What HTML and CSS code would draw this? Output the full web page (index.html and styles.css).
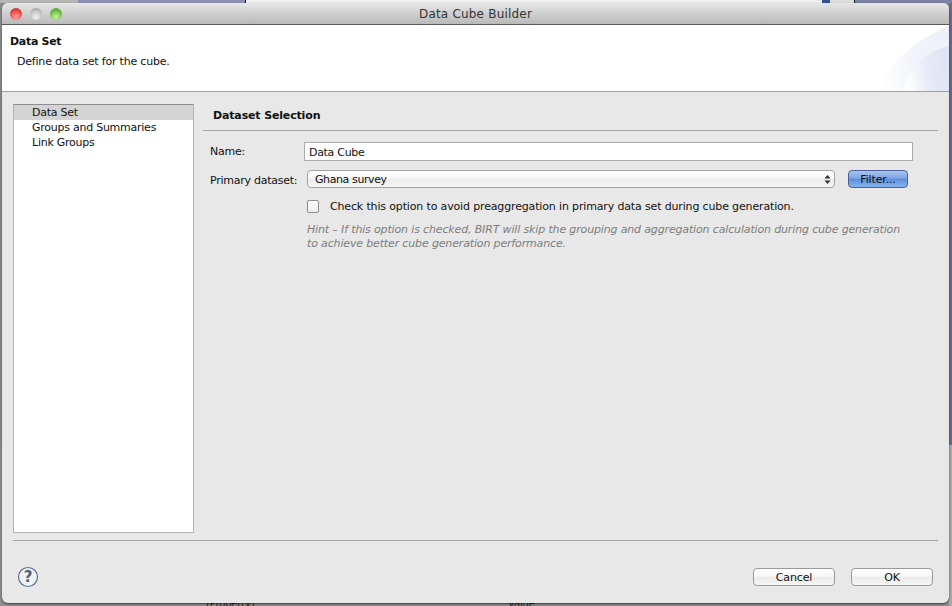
FILE: index.html
```html
<!DOCTYPE html>
<html lang="en">
<head>
    <meta charset="UTF-8">
    <meta name="viewport" content="width=device-width, initial-scale=1.0">
    <title>Data Cube Builder</title>
    <link rel="stylesheet" href="styles.css">
</head>
<body>
    <!-- bits of the windows behind the dialog -->
    <div class="desktop">
        <div class="desk-top"></div>
        <div class="desk-bottom">
            <span class="peek peek-left">(Property)</span>
            <span class="peek peek-right">Value</span>
        </div>
    </div>

    <div class="window">
        <div class="titlebar">
            <div class="lights">
                <span class="light light-red"></span>
                <span class="light light-grey"></span>
                <span class="light light-green"></span>
            </div>
            <div class="window-title">Data Cube Builder</div>
        </div>

        <div class="banner">
            <h1>Data Set</h1>
            <p>Define data set for the cube.</p>
            <svg class="banner-art" width="74" height="66" viewBox="0 0 74 66">
                <defs>
                    <linearGradient id="fade" x1="0" x2="1" y1="0.6" y2="0.4">
                        <stop offset="0" stop-color="#ffffff"/>
                        <stop offset="0.55" stop-color="#e6eaf7"/>
                        <stop offset="1" stop-color="#dfe4f4"/>
                    </linearGradient>
                </defs>
                <path d="M0 66C14 40 40 14 74 1V66Z" fill="url(#fade)" opacity="0.55"/>
                <path d="M28 66C34 44 50 27 74 21V66Z" fill="url(#fade)"/>
            </svg>
        </div>

        <div class="content">
            <div class="main">
                <ul class="nav">
                    <li class="selected">Data Set</li>
                    <li>Groups and Summaries</li>
                    <li>Link Groups</li>
                </ul>

                <div class="page">
                    <h2>Dataset Selection</h2>
                    <div class="form">
                        <div class="row row-name">
                            <label>Name:</label>
                            <input type="text" class="name-input" value="Data Cube">
                        </div>
                        <div class="row row-dataset">
                            <label>Primary dataset:</label>
                            <div class="select">
                                <span>Ghana survey</span>
                                <svg width="7" height="11" viewBox="0 0 7 11">
                                    <path d="M3.5 1L6.5 4.5H.5Z M3.5 10L.5 6.5H6.5Z" fill="#333"/>
                                </svg>
                            </div>
                            <button class="btn btn-default btn-filter">Filter...</button>
                        </div>
                        <div class="row-check">
                            <span class="checkbox"></span>
                            <span>Check this option to avoid preaggregation in primary data set during cube generation.</span>
                        </div>
                        <p class="hint">Hint – If this option is checked, BIRT will skip the grouping and aggregation calculation during cube generation<br>to achieve better cube generation performance.</p>
                    </div>
                </div>
            </div>

            <div class="footer">
                <svg class="help" width="22" height="22" viewBox="0 0 22 22">
                    <circle cx="11" cy="11" r="9.5" fill="#f0f1f3" stroke="#5a7096" stroke-width="1.2"/>
                    <text x="11" y="16" text-anchor="middle" class="help-mark">?</text>
                </svg>
                <div class="actions">
                    <button class="btn">Cancel</button>
                    <button class="btn">OK</button>
                </div>
            </div>
        </div>
    </div>
</body>
</html>
```

FILE: styles.css
```css
* {
    box-sizing: border-box;
}
html, body {
    margin: 0;
    height: 100%;
    overflow: hidden;
}
body {
    font-family: "DejaVu Sans", sans-serif;
    font-size: 11px;
    letter-spacing: -0.15px;
    color: #111;
    background-color: #8a8a8a;
}

/* desktop behind the dialog */
.desktop {
    position: absolute;
    inset: 0;
    display: flex;
    flex-direction: column;
}
.desk-top {
    height: 445px;
    background:
        linear-gradient(90deg, #b5b5b5 0, #b5b5b5 78px, #8c90b2 78px, #8c90b2 245px, #1a1a1a 245px, #1a1a1a 246px, #eeeeee 246px, #eeeeee 822px, #33518f 822px, #33518f 830px, #dddddd 830px, #dddddd 854px, #1a1a1a 854px, #1a1a1a 855px, #7c80a2 855px) top / 100% 3px no-repeat,
        linear-gradient(90deg, #8a8a8a 0, #8a8a8a 949px, #666a88 949px);
}
.desk-bottom {
    flex: 1;
    position: relative;
    background: linear-gradient(90deg, #8e8e8e 0, #8e8e8e 949px, #a8a8a8 949px);
}
.peek {
    position: absolute;
    top: 153px;
    font-size: 10px;
    color: #222;
    line-height: 12px;
}
.peek-left {
    left: 206px;
}
.peek-right {
    left: 508px;
}

/* dialog window */
.window {
    position: absolute;
    left: 2px;
    top: 3px;
    width: 947px;
    height: 600px;
    display: flex;
    flex-direction: column;
    border-radius: 6px;
    overflow: hidden;
    background-color: #e8e8e8;
    box-shadow: 0 1px 2px rgba(0, 0, 0, 0.6);
}
.titlebar {
    height: 22px;
    flex: none;
    display: flex;
    align-items: center;
    position: relative;
    background: linear-gradient(#e6e6e6, #b9b9b9);
    border-bottom: 1px solid #585858;
}
.lights {
    display: flex;
    gap: 8px;
    margin-left: 8px;
}
.light {
    width: 12px;
    height: 12px;
    border-radius: 50%;
}
.light-red {
    background: radial-gradient(circle at 50% 75%, #ffa8a0 0, #ec4a48 55%, #a81e22 100%);
}
.light-grey {
    background: radial-gradient(circle at 50% 75%, #f2f2f2 0, #c6c6c6 55%, #8e8e8e 100%);
}
.light-green {
    background: radial-gradient(circle at 50% 75%, #c8f2a0 0, #72c24a 55%, #3d8a24 100%);
}
.window-title {
    position: absolute;
    left: 0;
    right: 0;
    text-align: center;
    font-size: 12px;
    letter-spacing: 0.2px;
    color: #333;
}

.banner {
    height: 67px;
    flex: none;
    position: relative;
    background-color: #fff;
    border-bottom: 1px solid #a0a0a0;
}
.banner h1 {
    margin: 0;
    position: absolute;
    left: 8px;
    top: 10px;
    font-size: 11px;
    line-height: 14px;
    font-weight: bold;
    letter-spacing: -0.3px;
}
.banner p {
    margin: 0;
    position: absolute;
    left: 15px;
    top: 30px;
    line-height: 14px;
    letter-spacing: -0.2px;
}
.banner-art {
    position: absolute;
    right: 0;
    bottom: 0;
}

.content {
    flex: 1;
    display: flex;
    flex-direction: column;
    padding: 12px 11px 0;
}
.main {
    display: flex;
    height: 429px;
    flex: none;
}
.nav {
    list-style: none;
    margin: 0;
    padding: 0;
    width: 181px;
    flex: none;
    background-color: #fff;
    border: 1px solid #b4b4b4;
    border-top-color: #8e8e8e;
    letter-spacing: -0.25px;
}
.nav li {
    height: 15px;
    line-height: 15px;
    padding-left: 18px;
}
.nav li.selected {
    background-color: #d4d4d4;
}

.page {
    flex: 1;
    padding-left: 9px;
}
.page h2 {
    margin: 0;
    height: 27px;
    padding: 5px 0 0 10px;
    line-height: 14px;
    font-size: 11px;
    font-weight: bold;
    border-bottom: 1px solid #a4a4a4;
}
.form {
    padding: 11px 0 0 7px;
}
.row {
    display: flex;
    align-items: center;
}
.row label {
    flex: none;
    letter-spacing: -0.25px;
}
.row-name label {
    width: 94px;
}
.row-dataset {
    margin-top: 9px;
}
.row-dataset label {
    width: 97px;
    padding-top: 2px;
}
.name-input {
    width: 609px;
    height: 19px;
    padding: 1px 4px 0;
    font: inherit;
    letter-spacing: -0.3px;
    color: #111;
    background-color: #fff;
    border: 1px solid #ababab;
    border-radius: 0;
    outline: none;
}
.select {
    width: 528px;
    height: 18px;
    display: flex;
    align-items: center;
    justify-content: space-between;
    padding: 0 3px 0 7px;
    letter-spacing: -0.4px;
    background: linear-gradient(#ffffff 0, #f7f7f7 45%, #ebebeb 50%, #f6f6f6 100%);
    border: 1px solid #a2a2a2;
    border-radius: 4px;
}
.btn {
    height: 18px;
    width: 82px;
    padding: 0;
    font: inherit;
    letter-spacing: inherit;
    color: #111;
    background: linear-gradient(#ffffff 0, #f7f7f7 45%, #ebebeb 50%, #f6f6f6 100%);
    border: 1px solid #9a9a9a;
    border-radius: 4px;
    cursor: pointer;
}
.btn-default {
    background: linear-gradient(#a9c5ee 0, #7fa6e4 45%, #5c8edc 50%, #86b4ef 100%);
    border-color: #4f5f96;
}
.btn-filter {
    width: 60px;
    margin-left: 13px;
}
.row-check {
    display: flex;
    align-items: center;
    gap: 11px;
    margin: 12px 0 0 97px;
}
.checkbox {
    width: 12px;
    height: 13px;
    flex: none;
    background: linear-gradient(#ffffff, #ececec);
    border: 1px solid #8e8e8e;
    border-radius: 2px;
}
.hint {
    margin: 10px 0 0 97px;
    line-height: 14px;
    font-style: italic;
    color: #7d7d7d;
}

.footer {
    flex: 1;
    margin-top: 7px;
    padding: 0 5px 0 4px;
    display: flex;
    align-items: flex-start;
    justify-content: space-between;
    border-top: 1px solid #a4a4a4;
}
.help {
    margin-top: 25px;
}
.help-mark {
    font-size: 15px;
    font-weight: bold;
    fill: #4c5f80;
}
.actions {
    display: flex;
    gap: 16px;
    margin-top: 27px;
}
```
